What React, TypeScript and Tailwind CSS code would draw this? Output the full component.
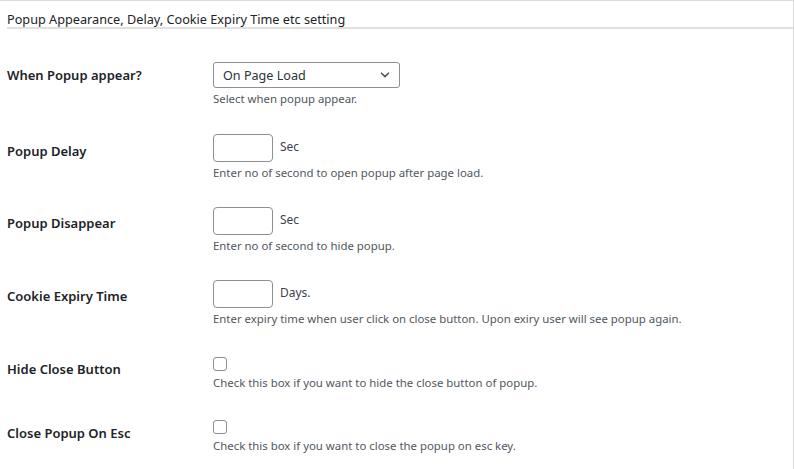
import React from "react";

const font = { fontFamily: '"Noto Sans", "Open Sans", sans-serif' };

function Label({ children, top }: { children: React.ReactNode; top: string }) {
  return (
    <div className={`w-[206px] shrink-0 text-[13px] font-semibold leading-[18px] text-[#1d2327] ${top}`}>
      {children}
    </div>
  );
}

function Desc({ children }: { children: React.ReactNode }) {
  return <div className="text-[11.4px] leading-[16px] text-[#50575e]">{children}</div>;
}

function NumberRow({ unit, desc }: { unit: string; desc: string }) {
  return (
    <div className="flex flex-col">
      <div className="flex items-start gap-[7px]">
        <div className="h-[28px] w-[60px] rounded-[4px] border border-[#8c8f94] bg-white" />
        <span className="mt-[5px] text-[12px] leading-[16px] text-[#3c434a]">{unit}</span>
      </div>
      <div className="mt-[3px]">
        <Desc>{desc}</Desc>
      </div>
    </div>
  );
}

function CheckRow({ desc }: { desc: string }) {
  return (
    <div className="flex flex-col">
      <div className="h-[14px] w-[14px] rounded-[3px] border border-[#8c8f94] bg-white" />
      <div className="mt-[4px]">
        <Desc>{desc}</Desc>
      </div>
    </div>
  );
}

export default function App() {
  return (
    <div className="h-[469px] w-[794px] overflow-hidden bg-white" style={font}>
      <div className="h-full border-r border-t border-[#dcdcde]">
        <div className="ml-[7px] flex h-[28px] items-start border-b-2 border-[#e0e0e2] pt-[10px] text-[12.7px] leading-[16px] text-[#1d2327]">
          Popup Appearance, Delay, Cookie Expiry Time etc setting
        </div>
        <div className="pl-[7px] pt-[33px]">
          <div className="flex h-[72px]">
            <Label top="mt-[4px]">When Popup appear?</Label>
            <div className="flex flex-col">
              <div className="flex h-[26px] w-[187px] items-center justify-between rounded-[3px] border border-[#8c8f94] bg-white pl-[9px] pr-[8px] pt-[2px] text-[12.6px] text-[#2c3338]">
                <span>On Page Load</span>
                <svg width="12" height="12" viewBox="0 0 12 12" fill="none" className="-mt-[2px]">
                  <path d="M2.5 4.2 L6 7.6 L9.5 4.2" stroke="#50575e" strokeWidth="1.6" strokeLinecap="round" strokeLinejoin="round" />
                </svg>
              </div>
              <div className="mt-[3px]">
                <Desc>Select when popup appear.</Desc>
              </div>
            </div>
          </div>
          <div className="flex h-[73px]">
            <Label top="mt-[8px]">Popup Delay</Label>
            <NumberRow unit="Sec" desc="Enter no of second to open popup after page load." />
          </div>
          <div className="flex h-[73px]">
            <Label top="mt-[7px]">Popup Disappear</Label>
            <NumberRow unit="Sec" desc="Enter no of second to hide popup." />
          </div>
          <div className="flex h-[77px]">
            <Label top="mt-[7px]">Cookie Expiry Time</Label>
            <NumberRow unit="Days." desc="Enter expiry time when user click on close button. Upon exiry user will see popup again." />
          </div>
          <div className="flex h-[63px]">
            <Label top="mt-[3px]">Hide Close Button</Label>
            <CheckRow desc="Check this box if you want to hide the close button of popup." />
          </div>
          <div className="flex">
            <Label top="mt-[4px]">Close Popup On Esc</Label>
            <CheckRow desc="Check this box if you want to close the popup on esc key." />
          </div>
        </div>
      </div>
    </div>
  );
}
